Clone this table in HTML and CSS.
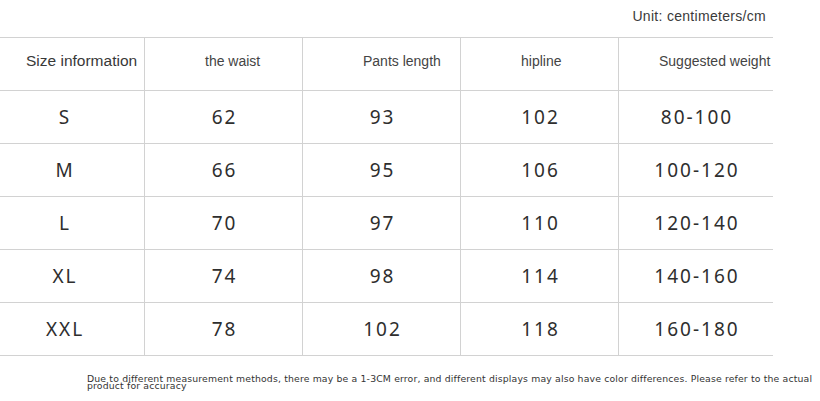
FILE: index.html
```html
<!DOCTYPE html>
<html lang="en">
<head>
<meta charset="utf-8">
<title>Size chart</title>
<link rel="stylesheet" href="styles.css">
</head>
<body>
<div class="page">
  <div class="unit-bar"><span class="unit">Unit: centimeters/cm</span></div>
  <div class="chart">
    <div class="cell head first">Size information</div>
    <div class="cell head">the waist</div>
    <div class="cell head">Pants length</div>
    <div class="cell head">hipline</div>
    <div class="cell head last">Suggested weight</div>

    <div class="cell data first">S</div>
    <div class="cell data">62</div>
    <div class="cell data">93</div>
    <div class="cell data">102</div>
    <div class="cell data">80-100</div>

    <div class="cell data first">M</div>
    <div class="cell data">66</div>
    <div class="cell data">95</div>
    <div class="cell data">106</div>
    <div class="cell data">100-120</div>

    <div class="cell data first">L</div>
    <div class="cell data">70</div>
    <div class="cell data">97</div>
    <div class="cell data">110</div>
    <div class="cell data">120-140</div>

    <div class="cell data first">XL</div>
    <div class="cell data">74</div>
    <div class="cell data">98</div>
    <div class="cell data">114</div>
    <div class="cell data">140-160</div>

    <div class="cell data first">XXL</div>
    <div class="cell data">78</div>
    <div class="cell data">102</div>
    <div class="cell data">118</div>
    <div class="cell data">160-180</div>
  </div>
  <p class="note">Due to different measurement methods, there may be a 1-3CM error, and different displays may also have color differences. Please refer to the actual product for accuracy</p>
</div>
</body>
</html>
```

FILE: styles.css
```css
html, body {
  margin: 0;
  padding: 0;
  background: #ffffff;
}

.page {
  width: 820px;
  height: 401px;
  overflow: hidden;
  font-family: "Liberation Sans", Arial, sans-serif;
  color: #333;
}

.unit-bar {
  width: 773px;
  height: 37px;
  display: flex;
  justify-content: flex-end;
  align-items: flex-start;
  box-sizing: border-box;
  padding: 8px 7px 0 0;
}

.unit {
  font-size: 14px;
  letter-spacing: 0.3px;
  color: #3a3a3a;
}

.chart {
  width: 773px;
  display: grid;
  grid-template-columns: 144px 158px 158px 158px 155px;
  grid-auto-rows: 53px;
  border-top: 1px solid #d2d2d2;
}

.cell {
  box-sizing: border-box;
  border-bottom: 1px solid #d2d2d2;
  border-left: 1px solid #d2d2d2;
  display: flex;
  align-items: center;
}

.cell.first {
  border-left: none;
}

.head {
  font-size: 14px;
  color: #444;
  padding: 0 0 6px 60px;
}

.head.first {
  font-size: 15.5px;
  color: #383838;
  padding-left: 26px;
}

.head.last {
  font-size: 14px;
  padding-left: 40px;
  white-space: nowrap;
}

.data {
  justify-content: center;
  font-family: "Noto Sans", "DejaVu Sans", sans-serif;
  font-size: 19px;
  letter-spacing: 2px;
  color: #2e2e2e;
  padding-left: 2px;
}

.data.first {
  padding-left: 0;
  padding-right: 14px;
}

.note {
  margin: 19px 0 0 87px;
  width: 733px;
  font-family: "DejaVu Sans", Verdana, sans-serif;
  font-size: 9.3px;
  line-height: 7px;
  letter-spacing: 0.16px;
  color: #333;
}
```
